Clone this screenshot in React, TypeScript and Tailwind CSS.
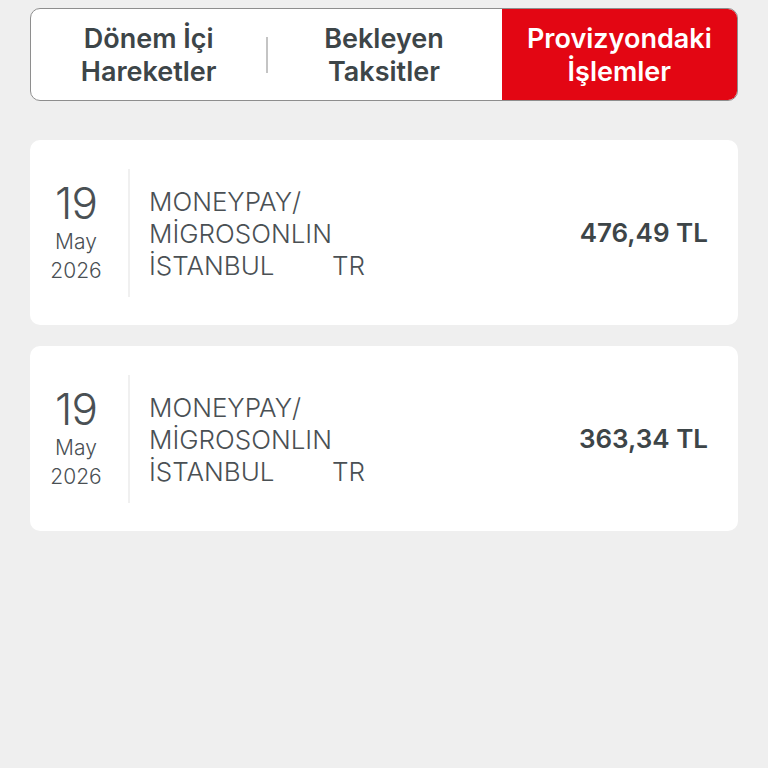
const tabs = [
    { id: "donem", lines: ["Dönem İçi", "Hareketler"] },
    { id: "bekleyen", lines: ["Bekleyen", "Taksitler"] },
    { id: "provizyon", lines: ["Provizyondaki", "İşlemler"] },
];

const transactions = [
    { id: 1, day: "19", month: "May", year: "2026", merchant: "MONEYPAY/", line2: "MİGROSONLIN", city: "İSTANBUL", country: "TR", amount: "476,49 TL" },
    { id: 2, day: "19", month: "May", year: "2026", merchant: "MONEYPAY/", line2: "MİGROSONLIN", city: "İSTANBUL", country: "TR", amount: "363,34 TL" },
];

export default function App() {
    const active = "provizyon";

    return (
        <div
            className="min-h-[768px] w-full bg-[#efefef] px-[30px] pt-[8px]"
            style={{ fontFamily: 'Inter, "Open Sans", sans-serif' }}
        >
            <div className="flex h-[93px] overflow-hidden rounded-[10px] border border-[#8e8e8e] bg-white">
                {tabs.map((tab, i) => {
                    const isActive = tab.id === active;
                    return (
                        <div
                            key={tab.id}
                            className={`relative flex flex-1 items-center justify-center ${isActive ? "bg-[#e30613] text-white" : "text-[#3d4548]"}`}
                        >
                            {i === 1 && (
                                <span className="absolute left-0 top-[28px] h-[36px] w-[2px] bg-[#c4c4c4]" />
                            )}
                            <div className="text-center text-[27px] font-semibold leading-[33px]">
                                {tab.lines.map((l) => (
                                    <div key={l}>{l}</div>
                                ))}
                            </div>
                        </div>
                    );
                })}
            </div>

            <div className="mt-[39px] flex flex-col gap-[21px]">
                {transactions.map((t) => (
                    <div key={t.id} className="flex h-[185px] items-center rounded-[10px] bg-white pr-[30px]">
                        <div className="flex h-[128px] w-[100px] flex-col items-center justify-center border-r-2 border-[#f0f0f0] pr-[6px] text-[#4a5054]">
                            <div className="text-[44px] font-light leading-[44px] tracking-[-1px]">{t.day}</div>
                            <div className="mt-[2px] text-[21px] font-light leading-[30px]">{t.month}</div>
                            <div className="text-[21px] font-light leading-[28px]">{t.year}</div>
                        </div>
                        <div className="ml-[19px] mt-[2px] flex-1 text-[26px] font-light leading-[32px] text-[#4a5054]">
                            <div>{t.merchant}</div>
                            <div>{t.line2}</div>
                            <div className="flex">
                                <span className="w-[183px]">{t.city}</span>
                                <span>{t.country}</span>
                            </div>
                        </div>
                        <div className="text-[26px] font-semibold text-[#3d4548]">{t.amount}</div>
                    </div>
                ))}
            </div>
        </div>
    );
}
